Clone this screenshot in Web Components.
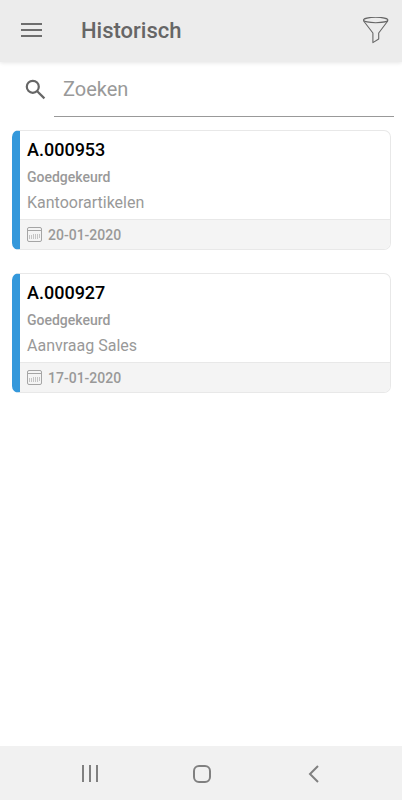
<!DOCTYPE html>
<html lang="nl">
<head>
<meta charset="utf-8">
<meta name="viewport" content="width=device-width, initial-scale=1">
<title>Historisch</title>
<style>
  body { margin: 0; background: #fff; font-family: Roboto, "Liberation Sans", sans-serif; }
</style>
</head>
<body>
<history-app>
  <app-header slot="header">Historisch</app-header>
  <search-field placeholder="Zoeken"></search-field>
  <request-list>
    <request-card status="Goedgekeurd" date="2020-01-20">
      <span slot="code">A.000953</span>
      <span slot="subject">Kantoorartikelen</span>
      <span slot="date">20-01-2020</span>
    </request-card>
    <request-card status="Goedgekeurd" date="2020-01-17">
      <span slot="code">A.000927</span>
      <span slot="subject">Aanvraag Sales</span>
      <span slot="date">17-01-2020</span>
    </request-card>
  </request-list>
  <system-nav slot="nav"></system-nav>
</history-app>

<script>
(function () {
  // every icon button starts from the same reset
  const BUTTON = `
    button{ display:block; margin:0; padding:0; border:0; background:none; color:inherit; cursor:pointer; }
    svg{ display:block; }
  `;

  class HistoryApp extends HTMLElement {
    constructor() {
      super();
      this.attachShadow({ mode: 'open' }).innerHTML = `
        <style>
          :host{ display:flex; flex-direction:column; min-height:100vh; }
          main{ flex:1; }
        </style>
        <slot name="header"></slot>
        <main><slot></slot></main>
        <slot name="nav"></slot>
      `;
    }
  }

  class AppHeader extends HTMLElement {
    constructor() {
      super();
      this.attachShadow({ mode: 'open' }).innerHTML = `
        <style>
          ${BUTTON}
          :host{ display:block; color:#666; background:#ececec; box-shadow:0 1px 4px rgba(0,0,0,.1); }
          header{ display:flex; align-items:center; height:62px; padding:0 12px 0 20px; }
          h1{ flex:1; margin:0 0 0 39px; font-size:22px; line-height:28px; font-weight:500; }
        </style>
        <header>
          <button type="button" aria-label="Menu">
            <svg width="22" height="22" viewBox="0 0 22 22" fill="none" stroke="#6e6e6e" stroke-width="1.8"><path d="M1 4H22M1 10H22M1 16H22"/></svg>
          </button>
          <h1><slot></slot></h1>
          <button type="button" aria-label="Filter">
            <svg width="28" height="28" viewBox="0 0 28 28" fill="none" stroke="#666" stroke-width="1.1" stroke-linejoin="round">
              <ellipse cx="13.7" cy="3" rx="12.2" ry="2.7"/>
              <path d="M1.5 3.4 2.4 5 10.9 16V25.6L16.7 22V16L25 5 25.9 3.4"/>
            </svg>
          </button>
        </header>
      `;
    }
  }

  class SearchField extends HTMLElement {
    constructor() {
      super();
      this.attachShadow({ mode: 'open' }).innerHTML = `
        <style>
          :host{ display:block; padding:0 8px 0 24px; }
          label{ display:flex; align-items:center; gap:6px; }
          svg{ flex:none; }
          input{
            flex:1; min-width:0; box-sizing:border-box; height:55px; margin:0; padding:0 9px;
            border:0; border-bottom:1px solid #999; border-radius:0; background:none; outline:0;
            color:#444; font:400 20px/24px Roboto, "Liberation Sans", sans-serif;
          }
          input::placeholder{ color:#999; opacity:1; }
        </style>
        <label>
          <svg width="24" height="24" viewBox="0 0 24 24" fill="none" stroke="#666" stroke-width="2.2" aria-hidden="true"><circle cx="8.8" cy="8.8" r="6"/><path d="M13.2 13.2 20.4 20.4"/></svg>
          <input type="search">
        </label>
      `;
      this.$input = this.shadowRoot.querySelector('input');
    }

    connectedCallback() {
      const text = this.getAttribute('placeholder') || '';
      this.$input.placeholder = text;
      this.$input.setAttribute('aria-label', text);
    }
  }

  class RequestList extends HTMLElement {
    constructor() {
      super();
      this.attachShadow({ mode: 'open' }).innerHTML = `
        <style>
          :host{ display:flex; flex-direction:column; gap:23px; padding:13px 11px 24px 12px; }
        </style>
        <slot></slot>
      `;
    }
  }

  class RequestCard extends HTMLElement {
    constructor() {
      super();
      this.attachShadow({ mode: 'open' }).innerHTML = `
        <style>
          :host{ display:block; color:#999; }
          article{
            overflow:hidden; border:1px solid #e8e8e8; border-left:8px solid #3498db;
            border-radius:7px; background:#fff;
          }
          .body{ padding:5px 7px 3px; }
          h2, p{ margin:0; }
          h2{ color:#000; font-size:18px; line-height:28px; font-weight:500; }
          .status{ font-size:14px; line-height:26px; font-weight:500; }
          .subject{ font-size:16px; line-height:26px; }
          footer{
            display:flex; align-items:center; gap:6px; height:29px; padding:0 7px;
            border-top:1px solid #e8e8e8; background:#f4f4f4;
          }
          time{ font-size:14px; line-height:20px; font-weight:500; }
        </style>
        <article>
          <div class="body">
            <h2><slot name="code"></slot></h2>
            <p class="status"></p>
            <p class="subject"><slot name="subject"></slot></p>
          </div>
          <footer>
            <svg width="15" height="16" viewBox="0 0 15 16" fill="none" stroke="#a5a5a5" aria-hidden="true">
              <rect x=".5" y=".5" width="14" height="14" rx="1.5"/>
              <path d="M.5 3.5H14.5"/>
              <path stroke="#c4c4c4" d="M2.5 8V12M4.5 8V12M6.5 7V12M8.5 7V12M10.5 7V12M12.5 7V11"/>
            </svg>
            <time><slot name="date"></slot></time>
          </footer>
        </article>
      `;
      this.$status = this.shadowRoot.querySelector('.status');
      this.$time = this.shadowRoot.querySelector('time');
    }

    connectedCallback() {
      this.$status.textContent = this.getAttribute('status') || '';
      this.$time.dateTime = this.getAttribute('date') || '';
    }
  }

  class SystemNav extends HTMLElement {
    constructor() {
      super();
      this.attachShadow({ mode: 'open' }).innerHTML = `
        <style>
          ${BUTTON}
          :host{ display:block; background:#f1f1f1; }
          nav{ display:grid; grid-template-columns:repeat(3, 1fr); height:54px; padding:0 32px 0 34px; }
          button{ display:flex; align-items:center; justify-content:center; }
          svg{ fill:none; stroke:#808080; stroke-width:2; }
        </style>
        <nav aria-label="Systeem">
          <button type="button" aria-label="Recent"><svg width="20" height="20" viewBox="0 0 20 20"><path d="M3 2V19M10 2V19M17 2V19"/></svg></button>
          <button type="button" aria-label="Start"><svg width="20" height="20" viewBox="0 0 20 20"><rect x="2" y="3" width="16" height="16" rx="5"/></svg></button>
          <button type="button" aria-label="Terug"><svg width="20" height="20" viewBox="0 0 20 20"><path d="M14 3 6 11 14 19"/></svg></button>
        </nav>
      `;
    }
  }

  customElements.define('history-app', HistoryApp);
  customElements.define('app-header', AppHeader);
  customElements.define('search-field', SearchField);
  customElements.define('request-list', RequestList);
  customElements.define('request-card', RequestCard);
  customElements.define('system-nav', SystemNav);
})();
</script>
</body>
</html>
